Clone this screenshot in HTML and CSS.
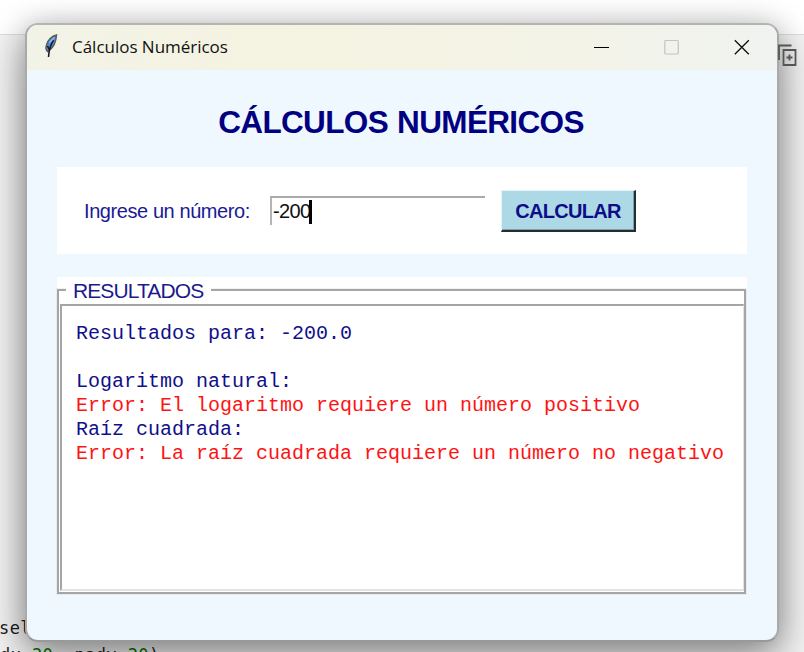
FILE: index.html
```html
<!DOCTYPE html>
<html lang="es">
<head>
<meta charset="utf-8">
<title>Cálculos Numéricos</title>
<link rel="stylesheet" href="styles.css">
</head>
<body>
<div class="desktop">
  <div class="topbar"></div>
  <div class="code line-a">self</div>
  <div class="code line-b">dx=<b>20</b>, pady=<b>20</b>)</div>

  <main class="window">
    <header class="titlebar">
      <svg class="feather" viewBox="0 0 16 26">
        <path d="M13.500 2C9 3 4.500 7 3.500 12C2.500 15 3 17 4.500 18.500L6 17.500C10 15 13 9 13.500 2Z" fill="#4b8bdc" stroke="#5c5c58" stroke-width="1.500"/>
        <path d="M10.500 7C8 11 6 15 5.500 24M4.500 13l2 4" fill="none" stroke="#15181c" stroke-width="1.500"/>
        <path d="M11.500 4.500L6.500 9.500" stroke="#8fbff3" stroke-width="1.400"/>
      </svg>
      <span class="caption">Cálculos Numéricos</span>
      <div class="controls">
        <svg viewBox="0 0 16 16"><path d="M0 8.500h15" stroke="#000"/></svg>
        <svg viewBox="0 0 16 16"><rect x=".8" y="1.500" width="13.500" height="13.500" rx="1" fill="none" stroke="#c3c4bd" stroke-width="1.200"/></svg>
        <svg viewBox="0 0 16 16"><path d="M.8 1.200l14 14M14.800 1.200l-14 14" stroke="#111" stroke-width="1.300"/></svg>
      </div>
    </header>
    <h1>CÁLCULOS NUMÉRICOS</h1>
    <section class="form">
      <label>Ingrese un número:</label>
      <div class="entry"><span>-200</span><i></i></div>
      <button>CALCULAR</button>
    </section>
    <section class="results">
      <div class="frame">
        <span class="legend">RESULTADOS</span>
        <div class="output"><p>Resultados para: -200.0</p><p>&nbsp;</p><p>Logaritmo natural:</p><p class="error">Error: El logaritmo requiere un número positivo</p><p>Raíz cuadrada:</p><p class="error">Error: La raíz cuadrada requiere un número no negativo</p></div>
      </div>
    </section>
  </main>
  <svg class="copy-icon" viewBox="0 0 20 24"><path d="M1 16V1.500H13.500M5.500 6h12v15h-12zM11.500 10.500v6M8.500 13.500h6" fill="none" stroke="#555" stroke-width="1.800"/></svg>
</div>
</body>
</html>
```
FILE: styles.css
```css
* { box-sizing: border-box; }
body { margin: 0; font-family: "Liberation Sans", Arial, sans-serif; }
.desktop { position: relative; width: 804px; height: 652px; overflow: hidden; background: #f3f3f3; }
.topbar { height: 35px; background: #fff; border-bottom: 1px solid #dedede; }
.copy-icon { position: absolute; left: 778px; top: 44px; width: 20px; height: 24px; }
.code { position: absolute; font: 17px/20px "DejaVu Sans Mono", monospace; letter-spacing: .4px; color: #1c1c1c; white-space: pre; }
.code b { font-weight: 400; color: #007500; }
.line-a { left: -1px; top: 618px; }
.line-b { left: 0; top: 645px; }

.window {
  position: absolute; left: 25px; top: 23px; width: 754px; height: 619px;
  border: 2px solid #a9a9a9; border-top-color: #b4b4b2; border-bottom-color: #989a9a;
  border-radius: 13px; background: #eff7ff; background-clip: padding-box; overflow: hidden;
}
.window { box-shadow: 0 16px 40px rgba(0, 0, 0, .4), 0 0 28px rgba(0, 0, 0, .16); }
.titlebar { display: flex; align-items: center; height: 45px; padding-left: 16px; background: linear-gradient(90deg, #f2f3e7, #f5f3e1 35%, #f3f3e8 75%, #f0f3f0); }
.feather { width: 16px; height: 26px; margin-top: -4px; }
.caption { margin: -2px 0 0 13px; font: 17px/24px "Open Sans", "Noto Sans", sans-serif; letter-spacing: -.02px; color: #111; white-space: nowrap; }
.controls { display: flex; gap: 54px; margin: -2px 27px 0 auto; }
.controls svg { width: 16px; height: 16px; }

h1 { margin: 34px 2px 0 0; font-size: 31.5px; line-height: 37px; letter-spacing: -.65px; word-spacing: 1px; text-align: center; color: #000080; white-space: nowrap; }
.form { display: flex; align-items: center; width: 690px; height: 87px; margin: 26px 0 0 30px; padding-left: 27px; background: #fff; }
label { width: 186px; padding-top: 2px; font-size: 20px; letter-spacing: -.42px; color: #1a1a94; white-space: nowrap; }
.entry { display: flex; align-items: center; width: 215px; height: 29px; padding-left: 1px; border-top: 2px solid #a9a9a9; border-left: 2px solid #b4b4b4; font-size: 20px; letter-spacing: -.6px; color: #111; }
.entry i { width: 3px; height: 24px; margin-left: -2px; background: #000; }
button { width: 135px; height: 42px; margin-left: 16px; padding: 2px 0 0; border: solid; border-width: 1px 2px 2px 1px; border-color: #e4f3f6 #252d30 #252d30 #e4f3f6; background: #add8e6; box-shadow: inset -1px -1px #7f9fa9; font: bold 20px "Liberation Sans", Arial, sans-serif; letter-spacing: -.7px; color: #0d0d88; }

.results { width: 690px; height: 317px; margin: 23px 0 0 30px; padding-top: 12px; background: linear-gradient(#fff, #fff) 0 0 / 690px 13px no-repeat; }
.frame { position: relative; height: 305px; width: 689px; padding: 13px 0 0 1px; border: 2px solid #a5a5a5; box-shadow: 0 0 0 1px rgba(190, 190, 190, .2); background: #fff; }
.legend { position: absolute; left: 7px; top: -13px; height: 24px; padding: 0 8px 0 7px; background: #fff; font-size: 21px; line-height: 25px; letter-spacing: -.9px; color: #1a1a8c; }
.output { height: 287px; padding: 16px 0 0 14px; border: solid; border-width: 2px 1px 2px 2px; border-color: #a5a5a5 #e3e3e3 #e3e3e3 #a5a5a5; background: #fff; font: 20px/24px "Liberation Mono", "Courier New", monospace; color: #10108a; white-space: pre; }
.output p { margin: 0; }
.output .error { color: #ff1414; }
```
